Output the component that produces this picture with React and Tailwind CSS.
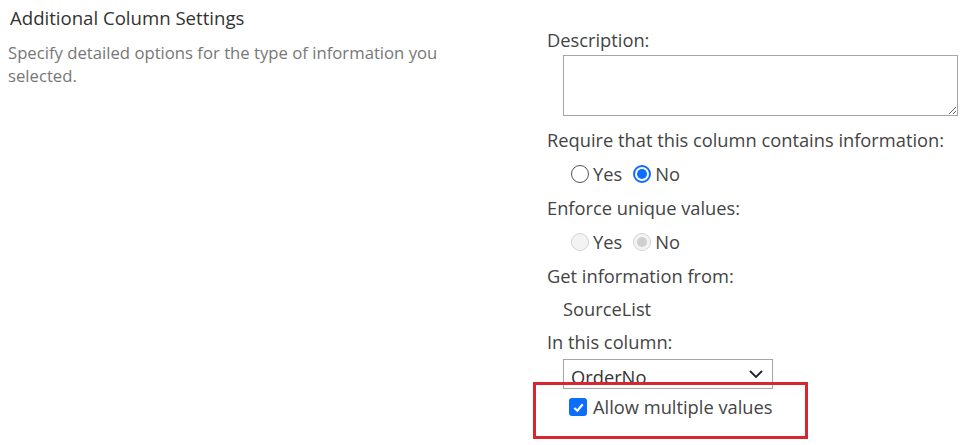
export default function App() {
  const font = { fontFamily: '"Open Sans", "Noto Sans", sans-serif' }

  return (
    <div className="w-[965px] h-[445px] bg-white flex overflow-hidden text-[18.3px]" style={font}>
      {/* left column */}
      <div className="w-[547px] shrink-0 pl-[8px] pt-[4px]">
        <h2 className="pl-[2px] text-[#333] text-[18.6px] leading-[28px]">Additional Column Settings</h2>
        <p className="mt-[9px] w-[450px] text-[#777] text-[16.7px] leading-[23px]">
          Specify detailed options for the type of information you selected.
        </p>
      </div>

      {/* right column */}
      <div className="relative flex-1 pt-[25px] text-[#444]">
        <div className="h-[30px] leading-[30px]">Description:</div>
        <textarea className="block ml-[16px] w-[395px] h-[61px] border border-[#a6a6a6] outline-none" />

        <div className="mt-[7px] h-[34px] leading-[34px]">Require that this column contains information:</div>
        <div className="h-[34px] pl-[24px] flex items-center">
          <Radio />
          <span className="ml-[4px]">Yes</span>
          <span className="ml-[11px]"><Radio checked /></span>
          <span className="ml-[4px]">No</span>
        </div>

        <div className="h-[34px] leading-[34px]">Enforce unique values:</div>
        <div className="h-[34px] pl-[24px] flex items-center">
          <Radio disabled />
          <span className="ml-[4px]">Yes</span>
          <span className="ml-[11px]"><Radio disabled checked /></span>
          <span className="ml-[4px]">No</span>
        </div>

        <div className="h-[34px] leading-[34px]">Get information from:</div>
        <div className="h-[32px] leading-[32px] pl-[16px]">SourceList</div>
        <div className="h-[34px] leading-[34px]">In this column:</div>

        <div className="ml-[16px] w-[210px] h-[30px] border border-[#a6a6a6] flex items-start justify-between pl-[7px] pr-[8px]">
          <span className="leading-[28px] mt-[3px] text-[#333]">OrderNo</span>
          <svg width="16" height="10" viewBox="0 0 16 10" className="mt-[9px]">
            <path d="M2 2 L8 8 L14 2" fill="none" stroke="#222" strokeWidth="1.8" />
          </svg>
        </div>

        <div className="mt-[8px] h-[20px] pl-[22px] flex items-center">
          <span className="w-[18px] h-[18px] rounded-[3px] bg-[#0d6efd] flex items-center justify-center">
            <svg width="13" height="13" viewBox="0 0 14 14">
              <path d="M2.5 7.5 L5.8 10.5 L11.5 3.5" fill="none" stroke="#fff" strokeWidth="2.4" />
            </svg>
          </span>
          <span className="ml-[6px] text-[#444]">Allow multiple values</span>
        </div>

        {/* highlight annotation */}
        <div className="absolute left-[-14px] top-[382px] w-[275px] h-[57px] border-[3px] border-[#d7262f] pointer-events-none" />
      </div>
    </div>
  )
}

function Radio({ checked = false, disabled = false }) {
  if (disabled) {
    return (
      <span className="w-[18px] h-[18px] rounded-full border border-[#d4d4d4] bg-[#f3f3f3] flex items-center justify-center">
        {checked && <span className="w-[10px] h-[10px] rounded-full bg-[#cfcfcf]" />}
      </span>
    )
  }
  return (
    <span
      className={
        checked
          ? 'w-[18px] h-[18px] rounded-full border-[2px] border-[#0d6efd] bg-white flex items-center justify-center'
          : 'w-[18px] h-[18px] rounded-full border border-[#555] bg-white flex items-center justify-center'
      }
    >
      {checked && <span className="w-[10px] h-[10px] rounded-full bg-[#0d6efd]" />}
    </span>
  )
}
